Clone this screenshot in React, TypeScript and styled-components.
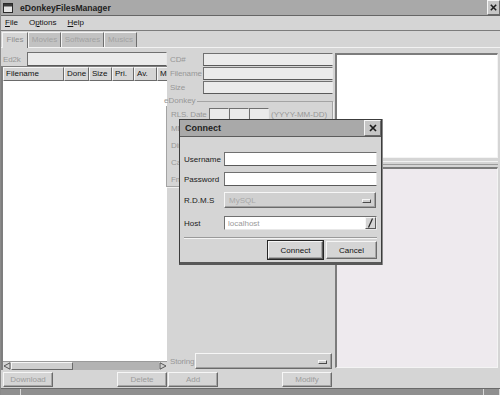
import React from "react";
import styled, { createGlobalStyle, css } from "styled-components";

const Global = createGlobalStyle`
  html, body { margin: 0; padding: 0; }
  body {
    width: 500px; height: 395px; overflow: hidden;
    background: #d5d5d5;
    font-family: "Liberation Sans", Arial, Helvetica, sans-serif;
    font-size: 8px;
  }
  * { box-sizing: border-box; }
`;

const BG = "#d5d5d5";
const DIS = "#979797";

const raised = css`
  border-style: solid;
  border-width: 1px;
  border-color: #f6f6f6 #6a6a6a #6a6a6a #f6f6f6;
`;
const sunken = css`
  border-style: solid;
  border-width: 1px;
  border-color: #6a6a6a #f4f4f4 #f4f4f4 #6a6a6a;
`;

const Window = styled.div`
  position: relative;
  width: 500px;
  height: 395px;
  display: flex;
  flex-direction: column;
  background: ${BG};
  border-left: 1px solid #8a8a8a;
  overflow: hidden;
`;

const TitleBar = styled.div`
  height: 16px;
  flex: none;
  display: flex;
  align-items: center;
  padding-left: 2px;
  background: #a9a9a9;
  border-bottom: 1px solid #666;
`;
const AppIcon = styled.svg`
  width: 10px;
  height: 10px;
  margin-right: 7px;
  flex: none;
`;
const TitleText = styled.div<{ $size?: number }>`
  flex: 1;
  font-weight: bold;
  font-size: ${(p) => p.$size ?? 9}px;
  color: #1e1e1e;
`;
const CloseBox = styled.div<{ $w: number }>`
  width: ${(p) => p.$w}px;
  height: 100%;
  display: flex;
  align-items: center;
  justify-content: center;
  background: #c6c6c6;
  ${raised};
`;

const MenuBar = styled.div`
  height: 15px;
  flex: none;
  display: flex;
  align-items: center;
  gap: 11px;
  padding-left: 4px;
  border-bottom: 1px solid #7c7c7c;
  color: #111;
`;
const MenuItem = styled.span`
  line-height: 14px;
`;

const TabBar = styled.div`
  height: 17px;
  flex: none;
  display: flex;
  align-items: flex-end;
  padding: 2px 0 0 1px;
  border-bottom: 1px solid #f2f2f2;
`;
const Tab = styled.div<{ $w: number; $sel?: boolean }>`
  width: ${(p) => p.$w}px;
  height: ${(p) => (p.$sel ? 16 : 15)}px;
  margin-bottom: ${(p) => (p.$sel ? -1 : 0)}px;
  text-align: center;
  line-height: 14px;
  color: ${(p) => (p.$sel ? "#8e8e8e" : "#a2a2a2")};
  background: ${(p) => (p.$sel ? BG : "#c2c2c2")};
  border: 1px solid;
  border-bottom: none;
  border-color: #f4f4f4 #6e6e6e #6e6e6e #f4f4f4;
`;

const Page = styled.div`
  height: 340px;
  flex: none;
  display: grid;
  grid-template-columns: 166px 167px 1fr;
  padding: 4px 0 1px 0;
`;

const Column = styled.div<{ $pad?: string }>`
  display: flex;
  flex-direction: column;
  min-height: 0;
  padding: ${(p) => p.$pad ?? "0"};
`;

const Label = styled.div<{ $w?: number; $pl?: number; $dark?: boolean }>`
  width: ${(p) => (p.$w ? `${p.$w}px` : "auto")};
  flex: none;
  padding-left: ${(p) => p.$pl ?? 0}px;
  color: ${(p) => (p.$dark ? "#1a1a1a" : DIS)};
  white-space: nowrap;
  letter-spacing: ${(p) => (p.$dark ? "0" : "-0.15px")};
`;

const FieldInput = styled.div<{ $w?: number; $white?: boolean }>`
  ${(p) => (p.$w ? `width: ${p.$w}px; flex: none;` : "flex: 1;")}
  height: 100%;
  background: ${(p) => (p.$white ? "#ffffff" : "#ebebeb")};
  ${sunken};
  border-color: #707070 #e8e8e8 #5a5a5a #707070;
  color: #9a9a9a;
  padding-left: 3px;
  display: flex;
  align-items: center;
`;

const Row = styled.div<{ $h: number; $mt?: number; $pr?: number }>`
  height: ${(p) => p.$h}px;
  margin-top: ${(p) => p.$mt ?? 0}px;
  padding-right: ${(p) => p.$pr ?? 0}px;
  flex: none;
  display: flex;
  align-items: center;
`;

const ListView = styled.div`
  flex: 1;
  min-height: 0;
  display: flex;
  flex-direction: column;
  border-left: 2px solid #7e7e7e;
  border-top: 1px solid #7e7e7e;
  overflow: hidden;
`;
const Header = styled.div`
  height: 14px;
  flex: none;
  display: flex;
  overflow: hidden;
`;
const HeaderCell = styled.div<{ $w: number }>`
  width: ${(p) => p.$w}px;
  flex: none;
  ${raised};
  line-height: 12px;
  padding-left: 2px;
  color: #111;
  white-space: nowrap;
  overflow: hidden;
`;
const ListBody = styled.div`
  flex: 1;
  background: #fff;
`;
const HScroll = styled.div`
  height: 9px;
  flex: none;
  display: flex;
  background: #b3b3b3;
  border-top: 1px solid #9a9a9a;
`;
const ScrollArrow = styled.svg`
  width: 8px;
  height: 8px;
  flex: none;
  background: ${BG};
`;
const ScrollThumb = styled.div<{ $w: number }>`
  width: ${(p) => p.$w}px;
  flex: none;
  background: #cfcfcf;
  ${raised};
`;
const ScrollTrack = styled.div`
  flex: 1;
`;

const ButtonRow = styled.div<{ $pl?: number; $pr?: number; $mt?: number }>`
  height: 15px;
  margin-top: ${(p) => p.$mt ?? 2}px;
  flex: none;
  display: flex;
  justify-content: space-between;
  padding: 0 ${(p) => p.$pr ?? 0}px 0 ${(p) => p.$pl ?? 0}px;
`;
const PushButton = styled.div<{ $w: number; $enabled?: boolean; $default?: boolean }>`
  width: ${(p) => p.$w}px;
  height: 100%;
  flex: none;
  display: flex;
  align-items: center;
  justify-content: center;
  background: ${BG};
  color: ${(p) => (p.$enabled ? "#111" : "#9c9c9c")};
  ${raised};
  box-shadow: inset -1px -1px 0 #a6a6a6;
  ${(p) =>
    p.$default &&
    css`
      outline: 1px solid #262626;
      outline-offset: 0;
      border-color: #f6f6f6 #5a5a5a #5a5a5a #f6f6f6;
    `}
`;

const GroupBox = styled.fieldset`
  margin: 2px 1px 0 -1px;
  padding: 2px 0 0 4px;
  border: 1px solid #a4a4a4;
  box-shadow: 1px 1px 0 #f0f0f0;
  flex: none;
  height: 91px;
  min-width: 0;
  display: flex;
  flex-direction: column;
`;
const GroupLegend = styled.legend`
  margin-left: -8px;
  padding: 0 1px;
  line-height: 10px;
  color: ${DIS};
`;
const SmallBoxes = styled.div`
  display: flex;
  height: 100%;
`;
const Hint = styled.span`
  color: ${DIS};
  margin-left: 2px;
  white-space: nowrap;
`;
const Spacer = styled.div`
  flex: 1;
`;

const Combo = styled.div`
  flex: 1;
  height: 100%;
  display: flex;
  align-items: center;
  justify-content: space-between;
  padding: 0 4px 0 4px;
  background: #d0d0d0;
  color: #a8a8a8;
  ${raised};
  box-shadow: inset -1px -1px 0 #a0a0a0;
`;
const ComboIndicator = styled.div`
  width: 9px;
  height: 4px;
  margin-top: 2px;
  background: #cfcfcf;
  border: 1px solid;
  border-color: #f6f6f6 #4a4a4a #4a4a4a #f6f6f6;
`;

const RightList = styled.div<{ $bg: string; $h?: number }>`
  ${(p) => (p.$h ? `height: ${p.$h}px; flex: none;` : "flex: 1;")}
  background: ${(p) => p.$bg};
  border-style: solid;
  border-width: 2px 1px 1px 2px;
  border-color: #7c7c7c #f4f4f4 #f4f4f4 #7c7c7c;
`;
const Splitter = styled.div`
  height: 9px;
  flex: none;
  display: flex;
  flex-direction: column;
  justify-content: center;
  &::before {
    content: "";
    display: block;
    height: 1px;
    background: #f2f2f2;
  }
  &::after {
    content: "";
    display: block;
    height: 1px;
    margin-top: 2px;
    background: #9c9c9c;
  }
`;

const StatusBar = styled.div`
  height: 7px;
  flex: none;
  display: flex;
  background: #8f8f8f;
  border-top: 1px solid #6a6a6a;
`;
const StatusSeg = styled.div<{ $w?: number }>`
  ${(p) => (p.$w ? `width: ${p.$w}px; flex: none;` : "flex: 1;")}
  border-right: 1px solid #d8d8d8;
`;

/* ---- dialog ---- */
const Dialog = styled.div`
  position: absolute;
  left: 178px;
  top: 119px;
  width: 203px;
  display: flex;
  flex-direction: column;
  background: ${BG};
  border: 1px solid #3c3c3c;
  border-bottom: 3px solid #585858;
  box-shadow: 1px 0 0 #8a8a8a;
`;
const DialogTitle = styled.div`
  height: 17px;
  flex: none;
  display: flex;
  align-items: center;
  padding-left: 5px;
  background: #a9a9a9;
  border-bottom: 1px solid #5c5c5c;
`;
const DialogBody = styled.div`
  padding: 15px 4px 3px 4px;
  display: flex;
  flex-direction: column;
`;
const HostField = styled.div`
  flex: 1;
  height: 100%;
  display: flex;
  background: #fff;
  border: 1px solid;
  border-color: #707070 #e8e8e8 #e8e8e8 #707070;
`;
const HostText = styled.div`
  flex: 1;
  padding-left: 3px;
  color: #9a9a9a;
  display: flex;
  align-items: center;
`;
const HostButton = styled.div`
  width: 11px;
  flex: none;
  background: ${BG};
  border: 1px solid;
  border-color: #f6f6f6 #5a5a5a #5a5a5a #f6f6f6;
  display: flex;
  align-items: center;
  justify-content: center;
`;
const Separator = styled.div`
  height: 2px;
  margin-top: 7px;
  flex: none;
  border-top: 1px solid #9a9a9a;
  border-bottom: 1px solid #f4f4f4;
`;
const DialogButtons = styled.div`
  height: 18px;
  margin-top: 2px;
  flex: none;
  display: flex;
  justify-content: flex-end;
  gap: 3px;
`;

const XMark = ({ size }: { size: number }) => (
  <svg width={size} height={size} viewBox="0 0 10 10">
    <path d="M2 2 L8 8 M8 2 L2 8" stroke="#1e1e1e" strokeWidth="1.7" />
  </svg>
);

export default function App() {
  return (
    <>
      <Global />
      <Window>
        <TitleBar>
          <AppIcon viewBox="0 0 10 10">
            <rect x="0.5" y="0.5" width="9" height="9" fill="#e4e4e4" stroke="#2a2a2a" />
            <rect x="1" y="1" width="8" height="2.5" fill="#3a3a3a" />
          </AppIcon>
          <TitleText $size={8.6}>eDonkeyFilesManager</TitleText>
          <CloseBox $w={13}>
            <XMark size={9} />
          </CloseBox>
        </TitleBar>

        <MenuBar>
          <MenuItem>
            <u>F</u>ile
          </MenuItem>
          <MenuItem>
            O<u>p</u>tions
          </MenuItem>
          <MenuItem>
            <u>H</u>elp
          </MenuItem>
        </MenuBar>

        <TabBar>
          <Tab $w={26} $sel>
            Files
          </Tab>
          <Tab $w={33}>Movies</Tab>
          <Tab $w={43}>Softwares</Tab>
          <Tab $w={33}>Musics</Tab>
        </TabBar>

        <Page>
          {/* left column */}
          <Column>
            <Row $h={14}>
              <Label $w={26} $pl={2}>
                Ed2k
              </Label>
              <FieldInput />
            </Row>
            <ListView>
              <Header>
                <HeaderCell $w={61}>Filename</HeaderCell>
                <HeaderCell $w={25}>Done</HeaderCell>
                <HeaderCell $w={23}>Size</HeaderCell>
                <HeaderCell $w={22}>Pri.</HeaderCell>
                <HeaderCell $w={23}>Av.</HeaderCell>
                <HeaderCell $w={30}>MD4</HeaderCell>
              </Header>
              <ListBody />
              <HScroll>
                <ScrollArrow viewBox="0 0 8 8">
                  <path d="M1 4 L7 0.8 L7 7.2 Z" fill="#d0d0d0" stroke="#4a4a4a" strokeWidth="0.9" />
                </ScrollArrow>
                <ScrollThumb $w={62} />
                <ScrollTrack />
                <ScrollArrow viewBox="0 0 8 8">
                  <path d="M7 4 L1 0.8 L1 7.2 Z" fill="#d0d0d0" stroke="#4a4a4a" strokeWidth="0.9" />
                </ScrollArrow>
              </HScroll>
            </ListView>
            <ButtonRow $pl={2}>
              <PushButton $w={50}>Download</PushButton>
              <PushButton $w={50}>Delete</PushButton>
            </ButtonRow>
          </Column>

          {/* middle column */}
          <Column>
            <Row $h={13} $mt={1} $pr={1}>
              <Label $w={36} $pl={3}>
                CD#
              </Label>
              <FieldInput />
            </Row>
            <Row $h={13} $mt={1} $pr={1}>
              <Label $w={36} $pl={3}>
                Filename
              </Label>
              <FieldInput />
            </Row>
            <Row $h={13} $mt={1} $pr={1}>
              <Label $w={36} $pl={3}>
                Size
              </Label>
              <FieldInput />
            </Row>

            <GroupBox>
              <GroupLegend>eDonkey</GroupLegend>
              <Row $h={12}>
                <Label $w={38}>RLS. Date</Label>
                <SmallBoxes>
                  <FieldInput $w={20} />
                  <FieldInput $w={20} />
                  <FieldInput $w={20} />
                </SmallBoxes>
                <Hint>(YYYY-MM-DD)</Hint>
              </Row>
              <Row $h={13} $mt={2}>
                <Label $w={38}>MD4</Label>
                <FieldInput />
              </Row>
              <Row $h={13} $mt={4}>
                <Label $w={38}>Dir</Label>
                <FieldInput />
              </Row>
              <Row $h={13} $mt={4}>
                <Label $w={38}>Cat</Label>
                <FieldInput />
              </Row>
              <Row $h={13} $mt={4}>
                <Label $w={38}>Fmt</Label>
                <FieldInput />
              </Row>
            </GroupBox>

            <Spacer />

            <Row $h={16} $pr={2}>
              <Label $w={28} $pl={3}>
                Storing
              </Label>
              <Combo>
                <span />
                <ComboIndicator />
              </Combo>
            </Row>
            <ButtonRow $pl={1} $pr={2} $mt={3}>
              <PushButton $w={50}>Add</PushButton>
              <PushButton $w={50}>Modify</PushButton>
            </ButtonRow>
          </Column>

          {/* right column */}
          <Column $pad="1px 2px 19px 1px">
            <RightList $bg="#ffffff" $h={105} />
            <Splitter />
            <RightList $bg="#eeeaee" />
          </Column>
        </Page>

        <StatusBar>
          <StatusSeg $w={20} />
          <StatusSeg />
          <StatusSeg $w={16} />
        </StatusBar>

        <Dialog>
          <DialogTitle>
            <TitleText>Connect</TitleText>
            <CloseBox $w={17}>
              <XMark size={10} />
            </CloseBox>
          </DialogTitle>
          <DialogBody>
            <Row $h={14}>
              <Label $w={40} $dark>
                Username
              </Label>
              <FieldInput $white />
            </Row>
            <Row $h={14} $mt={6}>
              <Label $w={40} $dark>
                Password
              </Label>
              <FieldInput $white />
            </Row>
            <Row $h={16} $mt={6} $pr={1}>
              <Label $w={40} $dark>
                R.D.M.S
              </Label>
              <Combo>
                <span>MySQL</span>
                <ComboIndicator />
              </Combo>
            </Row>
            <Row $h={14} $mt={8}>
              <Label $w={40} $dark>
                Host
              </Label>
              <HostField>
                <HostText>localhost</HostText>
                <HostButton>
                  <svg width="7" height="10" viewBox="0 0 7 10">
                    <path d="M1.5 9.5 L5.5 0.5" stroke="#222" strokeWidth="1.2" />
                  </svg>
                </HostButton>
              </HostField>
            </Row>
            <Separator />
            <DialogButtons>
              <PushButton $w={55} $enabled $default>
                Connect
              </PushButton>
              <PushButton $w={51} $enabled>
                Cancel
              </PushButton>
            </DialogButtons>
          </DialogBody>
        </Dialog>
      </Window>
    </>
  );
}
